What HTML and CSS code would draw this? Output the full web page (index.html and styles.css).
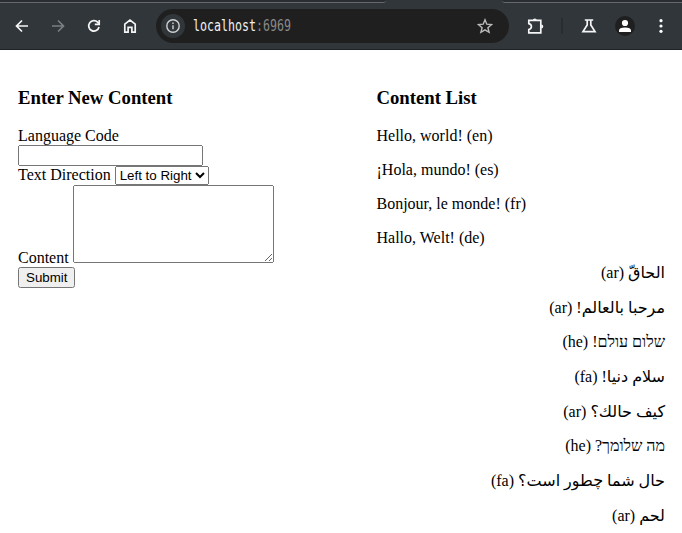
FILE: index.html
```html
<!DOCTYPE html>
<html lang="en">
<head>
<meta charset="utf-8">
<title>Content</title>
<link rel="stylesheet" href="styles.css">
</head>
<body>
<header class="browser">
  <div class="tabs"><div class="tab-left"></div><div class="tab-right"></div></div>
  <div class="toolbar">
    <svg class="icon back" viewBox="0 0 16 16"><path d="M14 8H3M8 2.5 2.5 8 8 13.5"/></svg>
    <svg class="icon forward" viewBox="0 0 16 16"><path d="M2 8h11M8 2.5 13.5 8 8 13.5"/></svg>
    <svg class="icon reload" viewBox="0 0 16 16"><path d="M13 9A5.2 5.2 0 1 1 11.8 4.4L13 5.6"/><path d="M13.2 2v4.4H8.8"/></svg>
    <svg class="icon home" viewBox="0 0 16 16"><path d="M2.8 14.2V6.2L8 2l5.2 4.2v8H9.9V9.3H6.1v4.9z"/></svg>
    <div class="address">
      <span class="info"><svg class="icon" viewBox="0 0 16 16"><circle cx="8" cy="8" r="6.2"/><path d="M8 7.3v4M8 4.5v1.5"/></svg></span>
      <span class="url">localhost<span class="port">:6969</span></span>
      <svg class="icon star" viewBox="0 0 16 16"><path d="m8 1.8 1.8 4.4 4.8.4-3.7 3.1 1.2 4.6L8 11.8l-4.1 2.5 1.2-4.6-3.7-3.1 4.8-.4z"/></svg>
    </div>
    <svg class="icon extension" viewBox="0 0 18 18"><path d="M1.8 3.4H13.8V15.8H1.8V12.6Q4.4 12 4.4 9.6T1.8 6.6z"/><path class="solid" d="M5.8 3.4a2 2 0 0 1 4 0zM14.2 7.4a2.1 2.1 0 0 1 0 4.2z"/></svg>
    <span class="divider"></span>
    <svg class="icon flask" viewBox="0 0 16 16"><path d="M3.8 2h8.4M6.2 2v5L2 13.6h12L9.8 7V2"/></svg>
    <span class="avatar"><svg viewBox="0 0 20 20"><circle cx="10" cy="7" r="3.1"/><path d="M4 16v-1.6q0-3 6-3t6 3V16z"/></svg></span>
    <svg class="menu" viewBox="0 0 16 16"><circle cx="8" cy="2.7" r="1.6"/><circle cx="8" cy="8" r="1.6"/><circle cx="8" cy="13.3" r="1.6"/></svg>
  </div>
</header>
<main class="columns">
  <form class="entry">
    <h3>Enter New Content</h3>
    <label for="code">Language Code</label>
    <input id="code" class="code" type="text">
    <div class="row direction"><label for="direction">Text Direction</label>
      <select id="direction"><option>Left to Right</option><option>Right to Left</option></select></div>
    <div class="row content"><label for="content">Content</label>
      <textarea id="content"></textarea></div>
    <button type="button">Submit</button>
  </form>
  <section class="list">
    <h3>Content List</h3>
    <p lang="en">Hello, world! (en)</p>
    <p lang="es">¡Hola, mundo! (es)</p>
    <p lang="fr">Bonjour, le monde! (fr)</p>
    <p lang="de">Hallo, Welt! (de)</p>
    <p lang="ar" dir="rtl">الحاقّ (ar)</p>
    <p lang="ar" dir="rtl">مرحبا بالعالم! (ar)</p>
    <p lang="he" dir="rtl">שלום עולם! (he)</p>
    <p lang="fa" dir="rtl">سلام دنیا! (fa)</p>
    <p lang="ar" dir="rtl">كيف حالك؟ (ar)</p>
    <p lang="he" dir="rtl">מה שלומך? (he)</p>
    <p lang="fa" dir="rtl">حال شما چطور است؟ (fa)</p>
    <p lang="ar" dir="rtl">لحم (ar)</p>
  </section>
</main>
</body>
</html>
```
FILE: styles.css
```css
* { box-sizing: border-box; }
body {
  margin: 0;
  height: 533px;
  overflow: hidden;
  background: #fff;
  color: #000;
  font: 16px "Liberation Serif", "DejaVu Sans", serif;
}
.browser { height: 50px; background: #31363b; border-bottom: 1px solid #202326; }
.tabs { height: 3px; display: flex; justify-content: space-between; }
.tab-left, .tab-right { background: #2a2e32; border-bottom: 1px solid #65696d; height: 3px; }
.tab-left { width: 386px; border-bottom-right-radius: 4px; }
.tab-right { width: 180px; border-bottom-left-radius: 4px; }
.toolbar { height: 46px; display: flex; align-items: center; }
.icon { width: 16px; height: 16px; flex: none; fill: none; stroke: #f5f5f5; stroke-width: 1.7; }
.back { margin-left: 14px; }
.forward { margin-left: 20px; stroke: #7b7f83; }
.reload { margin-left: 20px; }
.home { margin-left: 20px; }
.address {
  width: 353px;
  height: 34px;
  margin-left: 18px;
  padding: 0 16px 0 5px;
  border-radius: 17px;
  background: #1f1f1f;
  display: flex;
  align-items: center;
}
.info {
  width: 24px;
  height: 24px;
  border-radius: 50%;
  background: #31363b;
  display: flex;
  align-items: center;
  justify-content: center;
}
.info .icon { stroke: #d2d3d4; stroke-width: 1.4; }
.url {
  width: 120px;
  margin-left: 8px;
  color: #f0f0f0;
  font: 15px/20px "DejaVu Sans Mono", monospace;
  transform: scaleX(.775);
  transform-origin: left center;
  white-space: nowrap;
}
.port { color: #898989; }
.star { margin-left: auto; stroke: #b9babb; stroke-width: 1.4; }
.extension { width: 18px; height: 18px; margin-left: 18px; }
.extension .solid { fill: #f5f5f5; stroke: none; }
.divider { width: 2px; height: 16px; margin-left: 16px; background: #292d31; }
.flask { margin-left: 18px; }
.avatar { width: 20px; height: 20px; margin-left: 18px; border-radius: 50%; background: #1f1f1f; flex: none; }
.avatar svg, .menu { display: block; fill: #fff; }
.menu { width: 16px; height: 16px; margin-left: 18px; flex: none; }
.columns { display: grid; grid-template-columns: 358.5px 288.5px; padding: 37px 0 0 18px; }
h3 { margin: 0 0 19px; font-size: 18.72px; line-height: 21px; }
.entry label { line-height: 18px; }
.code { display: block; width: 185px; height: 21px; margin: 0; }
.row { display: flex; gap: 4px; }
.direction { height: 19px; }
.direction select { width: 94px; height: 19px; margin: 0; font-size: 13.333px; }
.content { align-items: flex-end; height: 78px; }
.content label { position: relative; top: 4px; }
textarea { width: 201px; height: 78px; margin: 0; }
button { display: block; width: 57px; height: 21px; margin-top: 4px; padding: 1px 6px; }
.list p { margin: 0 0 16px; }
```
